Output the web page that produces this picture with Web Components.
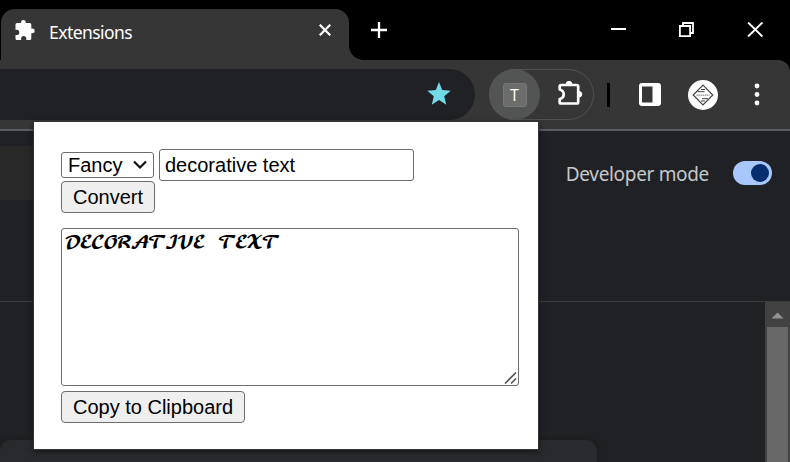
<!DOCTYPE html>
<html lang="en"><head><meta charset="utf-8"><title>Extensions</title>
<style>html,body{margin:0;width:790px;height:462px;overflow:hidden;background:#202124}</style></head>
<body><browser-window></browser-window>
<script>
const define=(name,css,html)=>customElements.define(name,class extends HTMLElement{
  constructor(){super();this.attachShadow({mode:'open'}).innerHTML=`<style>*{box-sizing:border-box}svg{display:block}${css}</style>${html}`}
});

define('tab-strip',`
:host{display:flex;height:60px;background:#000;color:#fff;font:18px/24px "Noto Sans",sans-serif}
.tab{position:relative;width:348px;margin:9px 0 0 1px;height:51px;background:#363636;border-radius:14px 14px 0 0;display:flex;align-items:flex-start;padding:10px 0 0 13px}
.tab:after{content:"";position:absolute;left:100%;bottom:0;width:14px;height:14px;background:radial-gradient(circle at 100% 0,transparent 13.5px,#363636 14px)}
.title{margin:1px auto 0 14px;letter-spacing:-.55px;font-size:17.5px}
.x{margin:5px 18px 0 0}.plus{margin:22px auto 0 22px}
.win{display:flex;gap:53px;padding:22px 27px 0 0}`,`
<div class="tab"><svg width="21" height="21" viewBox="0 0 21 21" fill="#fff"><path d="M3 4h4V3.300a2.400 2.400 0 0 1 4.800 0V4h4a1.500 1.500 0 0 1 1.500 1.500v4h1a2.400 2.400 0 0 1 0 4.800h-1v5.200a1.500 1.500 0 0 1-1.500 1.500h-3.500v-1.300a2.600 2.600 0 0 0-5.200 0V21H3a1.500 1.500 0 0 1-1.500-1.500V16h1.200a2.600 2.600 0 0 0 0-5.200H1.500V5.500A1.500 1.500 0 0 1 3 4z"/></svg><span class="title">Extensions</span>
<svg class="x" width="12" height="12" viewBox="0 0 12 12" stroke="#fff" stroke-width="2.200"><path d="M.7.700l10.600 10.600M11.300.700L.7 11.300"/></svg></div>
<svg class="plus" width="16" height="16" viewBox="0 0 16 16" stroke="#fff" stroke-width="2.300"><path d="M8 0v16M0 8h16"/></svg>
<div class="win"><svg width="15" height="15" viewBox="0 0 15 15"><path d="M0 7h15" stroke="#fff" stroke-width="2"/></svg>
<svg width="15" height="15" viewBox="0 0 15 15" fill="none" stroke="#fff" stroke-width="1.800"><path d="M.9 4h10.200v10.100H.9zM4 4V1h10v10h-3"/></svg>
<svg width="16" height="15" viewBox="0 0 16 15" stroke="#fff" stroke-width="1.900"><path d="M1.100.500l14.300 14M15.400.500L1.100 14.500"/></svg></div>`);

define('tool-bar',`
:host{display:block;height:71px;background:#000}
.bar{height:71px;display:flex;align-items:flex-start;background:#363636;border-radius:0 12px 0 0;border-bottom:2px solid #5b5d62;padding-top:9px}
.address{width:475px;height:51px;background:#202124;border-radius:0 26px 26px 0;display:flex;justify-content:flex-end;padding:12px 23px 0 0}
.ext{width:105px;height:51px;margin-left:14px;border:1.500px solid #515252;border-radius:26px;display:flex}
.round{width:51px;height:51px;margin:-1px 0 0 -1px;background:#535454;border-radius:50%;display:grid;place-items:center}
.letter{width:24px;height:24px;background:#6c6c6c;border:1px solid #777;border-radius:3px;color:#fff;font:16px/22px "Open Sans",sans-serif;text-align:center}
.puzzle{margin:11px 0 0 17px}.rule{width:3px;height:24px;background:#000;margin:14px 0 0 13px}
.panel{margin:14px 0 0 29px}.avatar{margin:11px 0 0 27px}.menu{margin:14px 0 0 36px}`,`
<div class="bar"><div class="address"><svg width="26" height="26" viewBox="0 0 26 26" fill="#73d9e7"><path d="M13 1l3.200 8 8.500.700-6.500 5.600 2 8.400L13 19l-7.200 4.700 2-8.400L1.300 9.700 9.800 9z"/></svg></div>
<div class="ext"><div class="round"><span class="letter">T</span></div>
<svg class="puzzle" width="27" height="27" viewBox="0 0 27 27" fill="none" stroke="#fff" stroke-width="2.700" stroke-linejoin="round"><path d="M4 4h15.700q1.500 0 1.500 1.500V21q0 1.500-1.500 1.500H4q-1.300 0-1.300-1.300V18c3-.6 4-2.600 4-4.800S5.700 9.400 2.700 8.500V5.300Q2.700 4 4 4z"/><path d="M9 3.300a3 3 0 0 1 6 0zM22 10.500a2.800 2.800 0 0 1 0 5.600z" fill="#fff" stroke-width="1"/></svg></div>
<div class="rule"></div>
<svg class="panel" width="22" height="23" viewBox="0 0 22 23"><rect width="22" height="23" rx="3" fill="#fff"/><path d="M3 3.500h10.500v16H3z" fill="#363636"/></svg>
<svg class="avatar" width="30" height="30" viewBox="0 0 30 30"><circle cx="15" cy="15" r="15" fill="#fff"/><g fill="none" stroke="#444"><path d="M15 5.200l9.800 9.800-9.800 9.800L5.200 15z" stroke-width="1.200"/><path d="M13 9.500h4M9.500 11.700h7M14 18.700h6M13 21h4"/><path d="M8.500 15.100h13" stroke="#777" stroke-dasharray="1.500 .5"/></g></svg>
<svg class="menu" width="6" height="24" viewBox="0 0 6 24" fill="#fff"><circle cx="3" cy="3" r="2.400"/><circle cx="3" cy="11.500" r="2.400"/><circle cx="3" cy="20" r="2.400"/></svg></div>`);

define('extensions-page',`
:host{display:grid;grid-template-rows:170px 161px;background:#202124;height:331px}
.head{display:flex;align-items:flex-start;padding-top:15px}
.search{width:120px;height:54px;background:#282828}
label{margin:15px 24px 0 auto;font:19px/26px "Noto Sans",sans-serif;letter-spacing:-.33px;color:#c6c8ca}
.switch{margin:15px 18px 0 0;width:39px;height:24px;border-radius:12px;background:#a8c7fa;padding:3px 3px 0 18px}
.knob{width:18px;height:18px;border-radius:50%;background:#062e6f}
.list{border-top:1px solid #3b3c3e;display:flex;justify-content:space-between}
.card{margin-top:138px;width:597px;height:40px;background:#292a2d;border-radius:11px 11px 0 0;box-shadow:0 0 4px #18191b}
.scroll{width:25px;background:#424242;padding:10px 2px 0;display:grid;grid-template-rows:15px 1fr}
.scroll svg{margin-left:4px}.thumb{background:#686868}`,`
<div class="head"><div class="search"></div><label>Developer mode</label><div class="switch"><div class="knob"></div></div></div>
<div class="list"><div class="card"></div><div class="scroll"><svg width="13" height="7" viewBox="0 0 13 7"><path d="M6.500.500L12.500 6.500H.5z" fill="#929292"/></svg><div class="thumb"></div></div></div>`);

define('text-popup',`
:host{display:block;background:#fff;box-shadow:0 0 0 1px #303437,0 2px 6px #111;padding:27px 19px 0 27px;font:20px/24px "Liberation Sans",Arial,sans-serif;color:#000}
.row{display:flex;align-items:flex-start}
.select,input,textarea{border:1px solid #6d6d6d;background:#fff;border-radius:3px;color:#000}
.select{width:93px;height:26px;margin-top:3px;padding:0 6px 0 6px;display:flex;justify-content:space-between;align-items:center}
input{width:255px;height:32px;margin-left:5px;padding:0 5px;font:20px "Liberation Sans",Arial,sans-serif}
button{display:block;border:1px solid #6d6d6d;background:#efefef;color:#000;border-radius:4px;height:32px;padding:0;font:20px "Liberation Sans",Arial,sans-serif}
.convert{width:94px}.copy{width:184px;margin-top:5px}
.area{position:relative;margin-top:15px;height:158px}
textarea{display:block;width:458px;height:158px;resize:none;padding:3px 2px;font:17px/24px "DejaVu Math TeX Gyre","DejaVu Sans Mono",monospace;letter-spacing:-2.35px;word-spacing:11px;overflow:hidden}
.grip{position:absolute;right:1px;bottom:1px}`,`
<div class="row"><div class="select"><span>Fancy</span><svg width="14" height="10" viewBox="0 0 14 10" fill="none" stroke="#111" stroke-width="2.200"><path d="M1 1.500l6 6 6-6"/></svg></div><input value="decorative text"></div>
<button class="convert">Convert</button>
<div class="area"><textarea spellcheck="false">𝓓𝓔𝓒𝓞𝓡𝓐𝓣𝓘𝓥𝓔 𝓣𝓔𝓧𝓣</textarea><svg class="grip" width="14" height="14" viewBox="0 0 14 14" stroke="#555" stroke-width="1.700"><path d="M1 12.500L12 1.500M7 12.500l5-5"/></svg></div>
<button class="copy">Copy to Clipboard</button>`);

define('browser-window',`
:host{display:block;position:relative;width:790px;height:462px;overflow:hidden}
text-popup{position:absolute;left:34px;top:122px;width:504px;height:327px}`,`
<tab-strip></tab-strip><tool-bar></tool-bar><extensions-page></extensions-page><text-popup></text-popup>`);
</script></body></html>
